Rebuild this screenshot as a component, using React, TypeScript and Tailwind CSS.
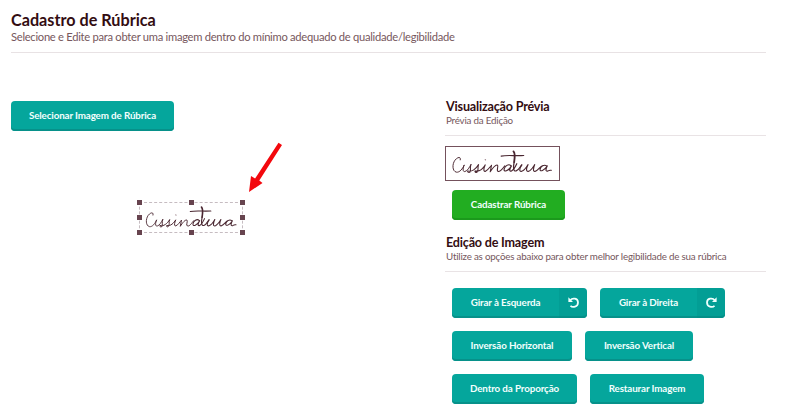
import React from 'react';

function Signature({ className }: { className: string }) {
  return (
    <svg className={className} viewBox="0 0 340 105" fill="none" stroke="#4a2731" strokeLinecap="round" strokeLinejoin="round" preserveAspectRatio="none" aria-label="Assinatura">
      <path strokeWidth="3" d="M43 41 C46 31 36 30 27 42 C18 55 19 77 31 80 C41 82 50 69 55 57 C50 68 50 80 57 78 C65 76 70 65 75 56" />
      <path strokeWidth="3.3" d="M75 56 C71 68 76 74 72 80 C68 83 63 78 66 76 C77 81 91 69 98 56 C94 66 99 73 94 79 C91 83 85 79 88 76 C101 80 112 67 118 57 C113 69 112 80 119 77 C126 74 132 64 137 58 L133 79 C140 67 150 55 155 58 C159 62 150 76 157 78 C164 79 170 69 177 60" />
      <path strokeWidth="3.5" d="M195 59 C188 52 177 61 175 70 C173 81 187 78 197 60 C190 71 190 79 197 76 C203 73 209 62 213 53" />
      <path strokeWidth="5.5" d="M203 14 C209 20 207 35 205 48" />
      <path strokeWidth="3.8" d="M205 48 C202 64 202 79 211 76 C220 73 223 62 228 57" />
      <path strokeWidth="3.5" d="M166 29 C184 25 209 29 234 27" />
      <path strokeWidth="3.4" d="M228 57 C221 68 219 80 228 77 C236 75 242 65 247 56 C241 69 240 80 249 77 C257 74 262 64 267 56 C262 68 261 80 269 77 C277 74 283 63 289 60 M303 60 C295 54 285 62 283 71 C282 80 296 76 305 60 C298 73 300 79 307 76 C312 73 313 74 317 74" />
      <path strokeWidth="3.5" stroke="#967d84" d="M118 40 L119 41" />
    </svg>
  );
}

function TurnIcon({ right = false }: { right?: boolean }) {
  return (
    <svg className={`h-[11px] w-[11px] ${right ? '-scale-x-100' : ''}`} viewBox="0 0 22 22" fill="none" stroke="#effffd" strokeWidth="3.5">
      <path d="M4.5 6.5 C9 .8 20 2.5 20 11 C20 20 9 22 5 17.5" />
      <path d="M.8 .5 V9.8 H10 Z" fill="#effffd" stroke="none" />
    </svg>
  );
}

function ActionButton({ label, width, turn, green = false }: { label: string; width: string; turn?: 'left' | 'right'; green?: boolean }) {
  return (
    <button className={`${width} flex h-[30px] shrink-0 overflow-hidden rounded-[4px] text-[9.8px] leading-[28px] font-bold tracking-[-0.12px] whitespace-nowrap text-[#f2fffd] ${green ? 'bg-[#22ad21] shadow-[inset_0_-2px_0_#1b991c]' : 'bg-[#05a69c] shadow-[inset_0_-2px_0_#07918a]'}`}>
      <span className="flex-1 text-center">{label}</span>
      {turn && <span className="flex h-[30px] w-[28px] items-center justify-center bg-[#008c83]/30 pb-px"><TurnIcon right={turn === 'right'} /></span>}
    </button>
  );
}

function SectionTitle({ title, text }: { title: string; text: string }) {
  return (
    <header className="h-[37px] border-b border-[#e9e3e5] pl-px whitespace-nowrap">
      <h2 className="text-[12.6px] leading-[15px] font-bold tracking-[-0.2px] text-[#330d12]">{title}</h2>
      <p className="text-[9.8px] leading-[12px] tracking-[-0.21px] text-[#76575d]">{text}</p>
    </header>
  );
}

function Handle() {
  return <i className="block h-[5px] w-[5px] bg-[#67444f]" />;
}

export default function App() {
  return (
    <main className="h-[410px] w-[800px] overflow-hidden bg-white pt-[10px] pl-[11px] font-['Lato',sans-serif]">
      <header className="h-[43px] w-[755px] border-b border-[#e8e2e4] whitespace-nowrap">
        <h1 className="text-[16.2px] leading-[20px] font-bold text-[#330d12]">Cadastro de Rúbrica</h1>
        <p className="text-[11.2px] leading-[14px] tracking-[-0.28px] text-[#76575d]">Selecione e Edite para obter uma imagem dentro do mínimo adequado de qualidade/legibilidade</p>
      </header>
      <div className="flex">
        <section className="w-[434px] pt-[48px]">
          <ActionButton label="Selecionar Imagem de Rúbrica" width="w-[163px]" />
          <svg className="mt-[10px] ml-[234px] h-[54px] w-[40px]" viewBox="0 0 40 54" fill="#f3080d">
            <path d="M33.5 1.8 L37 3.9 L14.3 39.4 L17.5 42 L4 51 L6 35 L10.1 37.4 Z" />
          </svg>
          <div className="relative mt-[5px] ml-[126px] h-[35px] w-[108px]">
            <div className="absolute top-[2px] left-[2px] h-[31px] w-[104px] border border-dashed border-[#c6bcc1]">
              <Signature className="h-[31px] w-[103px]" />
            </div>
            <div className="absolute inset-0 grid grid-cols-3 content-between">
              {[0, 1, 2].map(row => (
                <React.Fragment key={row}>
                  <Handle />
                  <span className="flex justify-center">{row !== 1 && <Handle />}</span>
                  <span className="flex justify-end"><Handle /></span>
                </React.Fragment>
              ))}
            </div>
          </div>
        </section>
        <section className="w-[321px] pt-[46px]">
          <SectionTitle title="Visualização Prévia" text="Prévia da Edição" />
          <div className="mt-[10px] h-[35px] w-[115px] border border-[#74515c]"><Signature className="h-[33px] w-[113px]" /></div>
          <div className="mt-[9px] ml-[7px]"><ActionButton label="Cadastrar Rúbrica" width="w-[113px]" green /></div>
          <div className="mt-[15px]"><SectionTitle title="Edição de Imagem" text="Utilize as opções abaixo para obter melhor legibilidade de sua rúbrica" /></div>
          <div className="mt-[16px] ml-[7px] flex flex-col gap-[13px]">
            <div className="flex gap-[13px]"><ActionButton label="Girar à Esquerda" width="w-[135px]" turn="left" /><ActionButton label="Girar à Direita" width="w-[125px]" turn="right" /></div>
            <div className="flex gap-[13px]"><ActionButton label="Inversão Horizontal" width="w-[120px]" /><ActionButton label="Inversão Vertical" width="w-[108px]" /></div>
            <div className="flex gap-[13px]"><ActionButton label="Dentro da Proporção" width="w-[125px]" /><ActionButton label="Restaurar Imagem" width="w-[114px]" /></div>
          </div>
        </section>
      </div>
    </main>
  );
}
